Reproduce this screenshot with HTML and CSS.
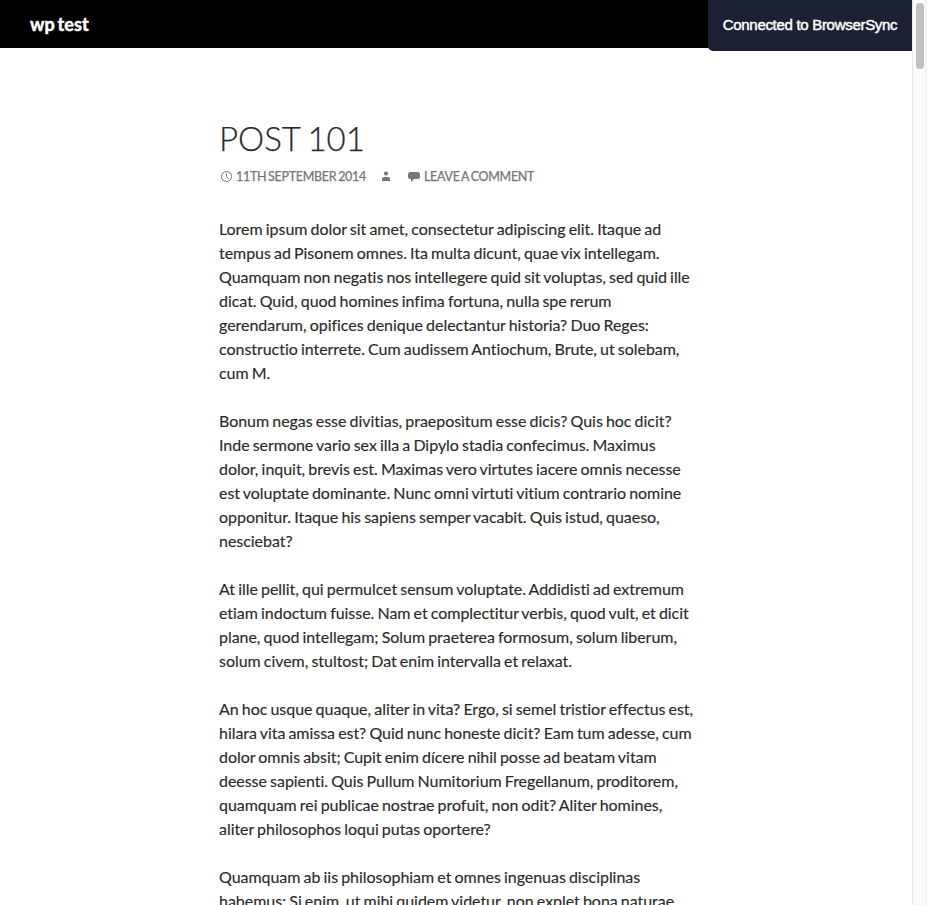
FILE: index.html
```html
<!DOCTYPE html>
<html lang="en">
<head>
<meta charset="utf-8">
<title>wp test</title>
<link rel="stylesheet" href="styles.css">
</head>
<body>
<header class="masthead"><h1 class="site-title">wp test</h1></header>
<div class="notify">Connected to BrowserSync</div>
<div class="scrollbar"><div class="thumb"></div></div>
<main class="post">
<h2 class="title">POST 101</h2>
<div class="meta">
<span class="item date"><svg class="clock" width="12" height="12" viewBox="0 0 12 12"><circle cx="5.500" cy="5.500" r="5"/><path d="M5.500 2.500v3.200l2.300 2.300"/></svg>11TH SEPTEMBER 2014</span>
<span class="item author"><svg class="solid" width="10" height="12" viewBox="0 0 10 12"><circle cx="5" cy="2.500" r="2.100"/><path d="M1 10V8Q1 6 3 6H7Q9 6 9 8V10Z"/></svg></span>
<span class="item comment"><svg class="solid" width="13" height="12" viewBox="0 0 13 12"><path d="M3 1H10.500Q13 1 13 3.500V5.500Q13 8 10.500 8H7L4 11V8H3.500Q1 8 1 5.500V3.500Q1 1 3 1Z"/></svg>LEAVE A COMMENT</span>
</div>
<div class="content">
<p>Lorem ipsum dolor sit amet, consectetur adipiscing elit. Itaque ad<br>tempus ad Pisonem omnes. Ita multa dicunt, quae vix intellegam.<br>Quamquam non negatis nos intellegere quid sit voluptas, sed quid ille<br>dicat. Quid, quod homines infima fortuna, nulla spe rerum<br>gerendarum, opifices denique delectantur historia? Duo Reges:<br>constructio interrete. Cum audissem Antiochum, Brute, ut solebam,<br>cum M.</p>
<p>Bonum negas esse divitias, praeposìtum esse dicis? Quis hoc dicit?<br>Inde sermone vario sex illa a Dipylo stadia confecimus. Maximus<br>dolor, inquit, brevis est. Maximas vero virtutes iacere omnis necesse<br>est voluptate dominante. Nunc omni virtuti vitium contrario nomine<br>opponitur. Itaque his sapiens semper vacabit. Quis istud, quaeso,<br>nesciebat?</p>
<p>At ille pellit, qui permulcet sensum voluptate. Addidisti ad extremum<br>etiam indoctum fuisse. Nam et complectitur verbis, quod vult, et dicit<br>plane, quod intellegam; Solum praeterea formosum, solum liberum,<br>solum civem, stultost; Dat enim intervalla et relaxat.</p>
<p>An hoc usque quaque, aliter in vita? Ergo, si semel tristior effectus est,<br>hilara vita amissa est? Quid nunc honeste dicit? Eam tum adesse, cum<br>dolor omnis absit; Cupit enim dícere nihil posse ad beatam vitam<br>deesse sapienti. Quis Pullum Numitorium Fregellanum, proditorem,<br>quamquam rei publicae nostrae profuit, non odit? Aliter homines,<br>aliter philosophos loqui putas oportere?</p>
<p>Quamquam ab iis philosophiam et omnes ingenuas disciplinas<br>habemus; Si enim, ut mihi quidem videtur, non explet bona naturae</p>
</div>
</main>
</body>
</html>
```

FILE: styles.css
```css
* { box-sizing: border-box; }
html, body { margin: 0; height: 905px; overflow: hidden; background: #fff; }
body { font-family: Lato, sans-serif; color: #2b2b2b; font-variant-ligatures: none; }
.masthead { height: 48px; background: #000; padding-left: 30px; }
.site-title { margin: 0; font-size: 18px; line-height: 49px; font-weight: 700; color: #fff; word-spacing: -2px; -webkit-text-stroke: .5px #fff; letter-spacing: .15px; }
.notify { position: absolute; top: 0; right: 15px; width: 204px; height: 51px; background: #1b2032; color: #fff; border-bottom-left-radius: 5px; font: 15px/50px "Liberation Sans", sans-serif; letter-spacing: -.3px; text-align: center; white-space: nowrap; -webkit-text-stroke: .45px #fff; }
.scrollbar { position: absolute; top: 0; right: 0; width: 15px; height: 905px; background: #fafafa; border-left: 1px solid #e8e8e8; border-right: 1px solid #ededed; }
.thumb { width: 8px; height: 66px; margin: 3px 0 0 3px; border-radius: 4px; background: #c1c1c1; }
.post { width: 474px; margin: 72px 0 0 219px; }
.title { margin: 0; font-size: 33px; line-height: 36px; font-weight: 300; word-spacing: -1.5px; -webkit-text-stroke: .25px #2b2b2b; }
.meta { display: flex; margin-top: 13px; height: 16px; font-size: 12.5px; line-height: 16px; color: #767676; white-space: nowrap; word-spacing: -1px; letter-spacing: -.3px; -webkit-text-stroke: .25px #767676; }
.item { display: flex; align-items: center; }
.date { width: 162px; gap: 3px; padding-left: 2px; }
.author { width: 26px; }
.comment { gap: 4px; }
.clock { fill: none; stroke: #767676; stroke-width: 1; }
.solid { fill: #767676; }
.content { margin-top: 32px; font-size: 16px; line-height: 24px; white-space: nowrap; word-spacing: -.9px; letter-spacing: -.04px; -webkit-text-stroke: .15px #2b2b2b; }
.content p { margin: 0 0 24px; }
```
